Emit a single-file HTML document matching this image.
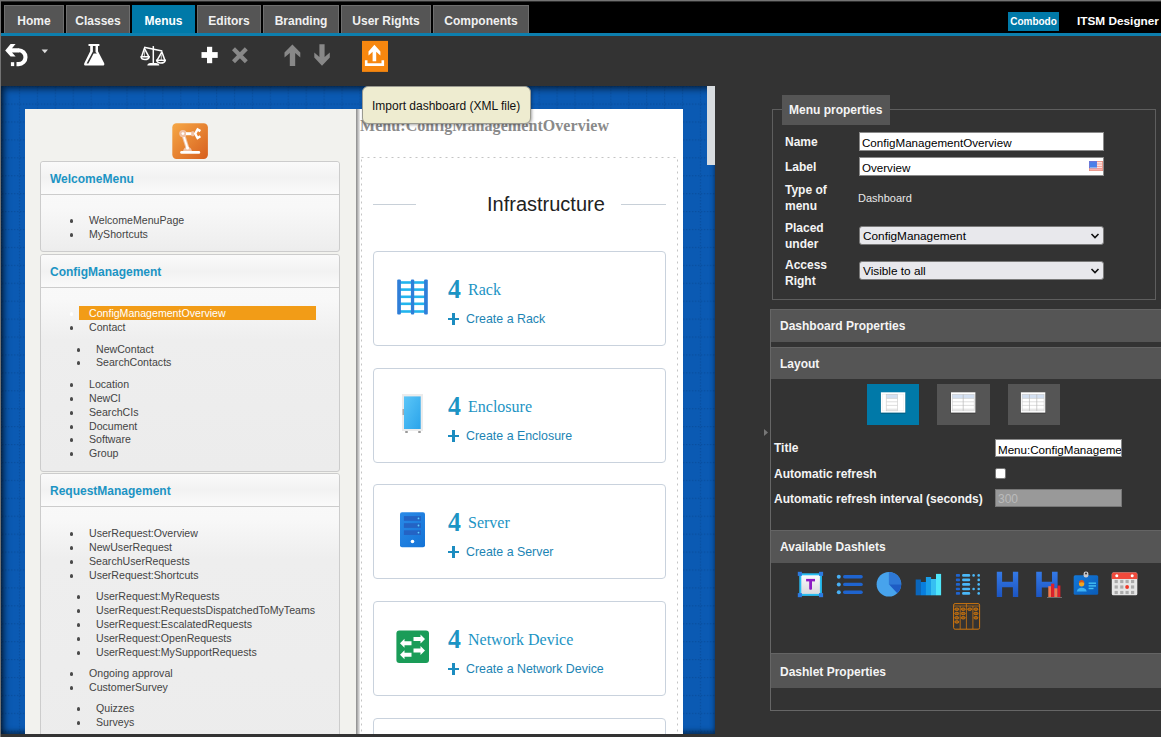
<!DOCTYPE html>
<html><head><meta charset="utf-8">
<style>
*{box-sizing:border-box;margin:0;padding:0}
html,body{width:1161px;height:737px;overflow:hidden;background:#333;font-family:"Liberation Sans",sans-serif}
.a{position:absolute}
#frame{position:absolute;left:0;top:0;width:1161px;height:737px;border-left:1px solid #737373;border-top:1px solid #737373;pointer-events:none;z-index:50}
#tabbar{position:absolute;left:1px;top:1px;width:1160px;height:32px;background:#000;border-top:1px solid #2e2e2e}
.tab{position:absolute;top:3px;height:28px;background:#555;border:1px solid #6e6e6e;border-bottom:none;color:#f0f0f0;font-weight:bold;font-size:12px;text-align:center;line-height:31px}
.tab.active{background:#0079a8;border-color:#0079a8;color:#fff}
#blueline{position:absolute;left:1px;top:33px;width:1160px;height:3px;background:#0d7fae}
#toolbar{position:absolute;left:1px;top:36px;width:1160px;height:50px;background:#333}
#canvas{position:absolute;left:1px;top:86px;width:714px;height:648px;background-color:#0b5ab3;overflow:hidden}
#grid{position:absolute;left:0;top:0;width:714px;height:648px}
#shade{position:absolute;left:0;top:0;width:714px;height:648px;box-shadow:inset 3px 3px 7px rgba(0,0,0,.6),inset 0 -3px 5px rgba(0,0,0,.4)}
#leftpanel{position:absolute;left:24px;top:23px;width:332px;height:630px;background:#f2f2ee}
#lpshadow{position:absolute;left:355px;top:23px;width:5px;height:630px;background:linear-gradient(90deg,#8a8a8a,#a8a8a8 25%,#dcdcdc 65%,#fafafa)}
#dash{position:absolute;left:359px;top:23px;width:323px;height:630px;background:#fff}
#scrollbar{position:absolute;left:706px;top:0;width:8px;height:79px;background:#d8dce0}
.mbox{position:absolute;left:15px;width:300px;border:1px solid #ccc;border-radius:3px;background:linear-gradient(#fafafa 0,#f8f8f8 45px,#eeeeee 85px,#ececec)}
.mhead{height:33px;border-bottom:1px solid #ccc;background:linear-gradient(#fafafa,#f2f2f2 50%,#fafafa);color:#1c94c4;font-weight:bold;font-size:12px;padding-left:9px;line-height:35px;border-radius:3px 3px 0 0}
.mi{position:absolute;font-size:10.6px;color:#444;white-space:nowrap;margin-top:1px}
.mi:before{content:"";position:absolute;left:-19.5px;top:5px;width:3.6px;height:3.6px;border-radius:50%;background:#4a4a4a}
.mi2:before{left:-19.5px}
.mw:before{background:#fff}
#tooltip{position:absolute;left:362px;top:86px;width:169px;height:38px;background:#eeecd0;border:1px solid #9a9a90;border-radius:6px;box-shadow:1px 1px 3px rgba(0,0,0,.35);font-size:12px;color:#111;padding-left:9px;line-height:38px;z-index:20}
.card{position:absolute;left:13px;width:293px;height:95px;border:1px solid #c9d2dd;border-radius:4px;background:#fff}
.cnum{position:absolute;left:74px;top:22.7px;font-family:"Liberation Serif",serif;font-weight:bold;font-size:28px;color:#1c94c4;line-height:28px;transform:scaleX(.92);transform-origin:0 0}
.cname{position:absolute;left:94px;top:28.5px;font-family:"Liberation Serif",serif;font-size:16px;color:#1c94c4;line-height:18px;white-space:nowrap}
.ccreate{position:absolute;left:92px;top:59px;font-size:12.4px;color:#1c84b4;line-height:16px;white-space:nowrap}
.ccreate:before{content:"";position:absolute;left:-18.5px;top:6.5px;width:11.6px;height:2.6px;background:#1c8cc0}.ccreate:after{content:"";position:absolute;left:-13.9px;top:2px;width:2.6px;height:11.6px;background:#1c8cc0}
.lbl{position:absolute;color:#f4f4f4;font-weight:bold;font-size:12px;line-height:15px;white-space:nowrap;margin-top:1px}
.inp{position:absolute;background:#fff;border:1px solid #8a8a8a;font-size:11.6px;color:#000;padding-left:2px;padding-top:1px;line-height:17px;white-space:nowrap;overflow:hidden}
.sel{position:absolute;background:#e8e8ec;border:1px solid #7a7a7a;border-radius:3px;font-size:11.8px;color:#000;padding-left:3px;padding-top:1px;line-height:17px;white-space:nowrap}
.bar{position:absolute;left:771px;width:390px;background:#555;border-top:1px solid #646464;color:#f4f4f4;font-weight:bold;font-size:12px;padding-left:9px}
.lbtn{position:absolute;top:384px;width:52px;height:41px;background:#555}
</style></head>
<body>
<div id="frame"></div>
<div id="tabbar">
  <div class="tab" style="left:3px;width:60px">Home</div>
  <div class="tab" style="left:65px;width:64px">Classes</div>
  <div class="tab active" style="left:131px;width:63px">Menus</div>
  <div class="tab" style="left:196px;width:64px">Editors</div>
  <div class="tab" style="left:262px;width:76px">Branding</div>
  <div class="tab" style="left:340px;width:90px">User Rights</div>
  <div class="tab" style="left:432px;width:96px">Components</div>
  <div class="a" style="left:1007px;top:10px;width:51px;height:19px;background:#0079a8;color:#fff;font-weight:bold;font-size:10px;line-height:19px;text-align:center">Combodo</div>
  <div class="a" style="left:1076px;top:9px;color:#fff;font-weight:bold;font-size:11.8px;line-height:20px;white-space:nowrap">ITSM Designer</div>
</div>
<div id="blueline"></div>
<div id="toolbar"></div>

<!-- TOOLBAR ICONS -->
<svg class="a" style="left:0;top:0;z-index:5" width="400" height="86" viewBox="0 0 400 86">
  <g fill="#fff">
    <polygon points="5.2,50.4 10.6,44.1 15.6,44.1 12,48.2 19,48.2 19,52.4 12,52.4 15.6,56.6 10.6,56.6"/>
    <rect x="10.9" y="62.2" width="3.3" height="3.9"/>
  </g>
  <path d="M18.6 50.3 A6.9 6.9 0 0 1 18.6 64.1 L16.5 64.1" fill="none" stroke="#fff" stroke-width="4.1"/>
  <polygon points="41.6,49.4 48,49.4 44.8,53.2" fill="#ddd"/>
  <!-- flask -->
  <path d="M88.5 44.1 H99.4 V45.9 H98 V51.2 L104.2 63.2 Q104.9 65.6 102.6 65.6 H85.8 Q83.5 65.6 84.3 63.2 L90.2 51.2 V45.9 H88.5 Z" fill="#fff"/>
  <path d="M92.9 45.9 H95.5 V52 L96.9 53.6 H93.6 L88.4 63.6 H86.6 L92.9 51.5 Z" fill="#333"/>
  <!-- scales -->
  <g fill="none" stroke="#fff" stroke-width="1.5" stroke-linejoin="round">
    <line x1="153.3" y1="46.1" x2="153.3" y2="63.5"/>
    <line x1="144.1" y1="47.3" x2="162.3" y2="51.1"/>
    <path d="M141.6 56.7 L144.4 48.3 L148.8 56.7 M157 60.3 L161.9 52 L164.9 60.3"/>
    <path d="M141 56.7 Q141.4 59.6 145 59.6 Q148.6 59.6 149.3 56.7 Z M156.6 60.2 Q157 63 160.8 63 Q164.6 63 165.3 60.2 Z"/>
  </g>
  <g stroke="#fff" stroke-width="0.7"><line x1="144.4" y1="51" x2="144.4" y2="56.5"/><line x1="161.3" y1="54.5" x2="161.3" y2="60"/></g>
  <path d="M147.3 65.6 H159.3 Q159.2 63.3 156 63 H150.6 Q147.4 63.3 147.3 65.6 Z" fill="#fff"/>
  <!-- plus -->
  <rect x="207" y="46.8" width="5.2" height="16.4" fill="#fff"/>
  <rect x="201.5" y="52.1" width="16.2" height="5.8" fill="#fff"/>
  <!-- x -->
  <path d="M233.5 48.8 L246.3 61.8 M246.3 48.8 L233.5 61.8" stroke="#888" stroke-width="4.2"/>
  <!-- up/down -->
  <polygon points="292.4,44.4 300.3,52.5 300.3,57.6 295.2,53 295.2,65.9 289.8,65.9 289.8,53 284.5,57.6 284.5,52.5" fill="#888"/>
  <polygon points="322,65.7 329.8,57.4 329.8,52.4 324.6,57 324.6,44.2 319.4,44.2 319.4,57 314.3,52.4 314.3,57.4" fill="#888"/>
  <!-- upload -->
  <rect x="362" y="40.9" width="26" height="31" fill="#f7870f"/>
  <polygon points="374.4,44.7 380.4,51.5 380.4,55.6 376.2,51.8 376.2,61.3 372.6,61.3 372.6,51.8 368.5,55.6 368.5,51.5" fill="#fff"/>
  <path d="M366.2 60.2 V64.6 H382.8 V60.2" fill="none" stroke="#fff" stroke-width="2.6"/>
</svg>

<div id="canvas">
  <svg id="grid" width="714" height="648"><defs><pattern id="gp" x="17.9" y="17.5" width="17.92" height="17.92" patternUnits="userSpaceOnUse">
  <g fill="#002050" opacity=".22"><rect x="0" y="1" width="1.2" height="1.4"/><rect x="0" y="4" width="1.2" height="1.4"/><rect x="0" y="7" width="1.2" height="1.4"/><rect x="0" y="10" width="1.2" height="1.4"/><rect x="0" y="13" width="1.2" height="1.4"/><rect x="0" y="16" width="1.2" height="1.4"/>
  <rect y="0" x="1" height="1.2" width="1.4"/><rect y="0" x="4" height="1.2" width="1.4"/><rect y="0" x="7" height="1.2" width="1.4"/><rect y="0" x="10" height="1.2" width="1.4"/><rect y="0" x="13" height="1.2" width="1.4"/><rect y="0" x="16" height="1.2" width="1.4"/></g>
  </pattern></defs><rect width="714" height="648" fill="url(#gp)"/></svg>
  <div id="shade"></div>
  <div id="scrollbar"></div>
  <div id="leftpanel">
    <!-- logo -->
    <svg class="a" style="left:147px;top:14px" width="37" height="37" viewBox="0 0 37 37">
      <defs><linearGradient id="lg" x1="0" y1="0" x2="1" y2="1"><stop offset="0" stop-color="#f6a846"/><stop offset="1" stop-color="#d75f1e"/></linearGradient></defs>
      <rect x="0.3" y="0.2" width="35.6" height="35.7" rx="4.2" fill="url(#lg)"/>
      <path d="M11 28.3 Q11.8 24 15.5 24 Q19.2 24 20 28.3 Z" fill="#f1c2a6"/>
      <line x1="15.5" y1="25" x2="10.9" y2="10.6" stroke="#f1c2a6" stroke-width="3.8"/>
      <line x1="15.5" y1="25" x2="10.9" y2="10.6" stroke="#fff" stroke-width="1.8"/>
      <circle cx="10.9" cy="10.6" r="3.7" fill="#f1c2a6"/>
      <circle cx="10.9" cy="10.6" r="1.4" fill="#fff"/>
      <circle cx="15.5" cy="25" r="1.5" fill="#fff"/>
      <rect x="14" y="9.2" width="6" height="3" fill="#fff"/>
      <rect x="19.2" y="8.2" width="3" height="5" rx="1" fill="#f1c2a6"/>
      <path d="M28.4 8.1 L25.6 6.4 L23.2 10.7 L25.6 15 L28.4 13.3" fill="none" stroke="#fff" stroke-width="2.4"/>
      <rect x="8.2" y="28.1" width="20" height="2.7" rx="1.3" fill="#fff"/>
    </svg>
    <div class="mbox" style="top:52px;height:91px">
      <div class="mhead">WelcomeMenu</div>
    </div>
    <div class="mi" style="left:64px;top:104px">WelcomeMenuPage</div>
    <div class="mi" style="left:64px;top:118px">MyShortcuts</div>

    <div class="mbox" style="top:145px;height:218px">
      <div class="mhead">ConfigManagement</div>
    </div>
    <div class="a" style="left:54px;top:197px;width:237px;height:14px;background:#f29c17"></div>
    <div class="mi mw" style="left:64px;top:197px;color:#fff">ConfigManagementOverview</div>
    <div class="mi" style="left:64px;top:211px">Contact</div>
    <div class="mi mi2" style="left:71px;top:233px">NewContact</div>
    <div class="mi mi2" style="left:71px;top:246px">SearchContacts</div>
    <div class="mi" style="left:64px;top:268px">Location</div>
    <div class="mi" style="left:64px;top:282px">NewCI</div>
    <div class="mi" style="left:64px;top:296px">SearchCIs</div>
    <div class="mi" style="left:64px;top:310px">Document</div>
    <div class="mi" style="left:64px;top:323px">Software</div>
    <div class="mi" style="left:64px;top:337px">Group</div>

    <div class="mbox" style="top:364px;height:301px">
      <div class="mhead">RequestManagement</div>
    </div>
    <div class="mi" style="left:64px;top:417px">UserRequest:Overview</div>
    <div class="mi" style="left:64px;top:431px">NewUserRequest</div>
    <div class="mi" style="left:64px;top:445px">SearchUserRequests</div>
    <div class="mi" style="left:64px;top:459px">UserRequest:Shortcuts</div>
    <div class="mi mi2" style="left:71px;top:480px">UserRequest:MyRequests</div>
    <div class="mi mi2" style="left:71px;top:494px">UserRequest:RequestsDispatchedToMyTeams</div>
    <div class="mi mi2" style="left:71px;top:508px">UserRequest:EscalatedRequests</div>
    <div class="mi mi2" style="left:71px;top:522px">UserRequest:OpenRequests</div>
    <div class="mi mi2" style="left:71px;top:536px">UserRequest:MySupportRequests</div>
    <div class="mi" style="left:64px;top:557px">Ongoing approval</div>
    <div class="mi" style="left:64px;top:571px">CustomerSurvey</div>
    <div class="mi mi2" style="left:71px;top:592px">Quizzes</div>
    <div class="mi mi2" style="left:71px;top:606px">Surveys</div>
  </div>
  <div id="lpshadow"></div>
  <div id="dash">
    <div class="a" style="left:0;top:8px;font-family:'Liberation Serif',serif;font-weight:bold;font-size:16px;color:#8a8a8a;white-space:nowrap;line-height:18px;letter-spacing:.07px">Menu:ConfigManagementOverview</div>
    <svg class="a" style="left:1px;top:48px" width="320" height="600"><rect x="0.5" y="0.5" width="316" height="640" fill="none" stroke="#c4c4c4" stroke-width="1" stroke-dasharray="2 4"/></svg>
    <div class="a" style="left:13px;top:95px;width:43px;height:1px;background:#c8d0d8"></div>
    <div class="a" style="left:261px;top:95px;width:45px;height:1px;background:#c8d0d8"></div>
    <div class="a" style="left:127px;top:83px;font-size:20px;color:#222;line-height:24px">Infrastructure</div>

    <div class="card" style="top:142px">
      <svg class="a" style="left:23px;top:27px" width="33" height="37" viewBox="0 0 33 37">
        <g fill="#22b5ee"><rect x="3" y="2.2" width="27" height="2.6"/><rect x="3" y="9.3" width="27" height="2.6"/><rect x="3" y="16.5" width="27" height="2.6"/><rect x="3" y="23.5" width="27" height="2.6"/><rect x="3" y="31.2" width="27" height="2.6"/></g>
        <g fill="#2f7ed8"><rect x="0.2" y="0.6" width="3.7" height="34.8" rx="1"/><rect x="13.9" y="0.6" width="3.3" height="34.8" rx="1"/><rect x="27.1" y="0.6" width="3.7" height="34.8" rx="1"/></g>
      </svg>
      <div class="cnum">4</div><div class="cname">Rack</div>
      <div class="ccreate">Create a Rack</div>
    </div>
    <div class="card" style="top:259px">
      <svg class="a" style="left:27px;top:25px" width="24" height="41" viewBox="0 0 24 41">
        <defs><linearGradient id="eg" x1="0" y1="0" x2="1" y2="1"><stop offset="0" stop-color="#5cc6f8"/><stop offset="1" stop-color="#2aa4ea"/></linearGradient></defs>
        <rect x="1" y="0" width="21" height="37" fill="#ececec"/>
        <rect x="3" y="2.4" width="16.7" height="32.6" fill="url(#eg)"/>
        <rect x="1.5" y="15" width="1.5" height="6" fill="#aaa"/>
        <rect x="4" y="37" width="3" height="2" rx="1" fill="#999"/><rect x="17" y="37" width="3" height="2" rx="1" fill="#999"/>
      </svg>
      <div class="cnum">4</div><div class="cname">Enclosure</div>
      <div class="ccreate">Create a Enclosure</div>
    </div>
    <div class="card" style="top:375px">
      <svg class="a" style="left:26px;top:27px" width="26" height="36" viewBox="0 0 26 36">
        <defs><linearGradient id="sg" x1="0" y1="0" x2="1" y2="1"><stop offset="0" stop-color="#2a8ae8"/><stop offset="1" stop-color="#1473d6"/></linearGradient></defs>
        <rect x="0" y="0.2" width="25" height="35" rx="2" fill="url(#sg)"/>
        <rect x="3.9" y="4.1" width="17.1" height="4.7" fill="#2463c4"/>
        <rect x="3.9" y="11.2" width="17.1" height="4.7" fill="#2463c4"/>
        <rect x="3.9" y="18.3" width="17.1" height="4.7" fill="#2463c4"/>
        <circle cx="18.5" cy="6.4" r="0.9" fill="#5fd0ff"/><circle cx="18.5" cy="13.5" r="0.9" fill="#5fd0ff"/><circle cx="18.5" cy="20.6" r="0.9" fill="#5fd0ff"/>
        <circle cx="12.5" cy="29.5" r="1.8" fill="#fff"/>
      </svg>
      <div class="cnum">4</div><div class="cname">Server</div>
      <div class="ccreate">Create a Server</div>
    </div>
    <div class="card" style="top:492px">
      <svg class="a" style="left:22px;top:28px" width="34" height="34" viewBox="0 0 34 34">
        <rect x="0.4" y="0.5" width="32.6" height="32.6" rx="3" fill="#1a9c58"/>
        <g fill="#fff">
          <path d="M17.5 7 H24.5 V4.5 L29 9 L24.5 13.5 V11 H17.5 Z"/>
          <path d="M17.5 18.5 H24.5 V16 L29 20.5 L24.5 25 V22.5 H17.5 Z"/>
          <path d="M15.5 11.3 H8.5 V8.8 L4 13.3 L8.5 17.8 V15.3 H15.5 Z"/>
          <path d="M15.5 22.8 H8.5 V20.3 L4 24.8 L8.5 29.3 V26.8 H15.5 Z"/>
        </g>
      </svg>
      <div class="cnum">4</div><div class="cname">Network Device</div>
      <div class="ccreate">Create a Network Device</div>
    </div>
    <div class="card" style="top:609px"></div>
  </div>
</div>

<div id="tooltip">Import dashboard (XML file)</div>

<!-- RIGHT PANEL -->
<div class="a" style="left:772px;top:109px;width:384px;height:191px;border:1px solid #5e5e5e"></div>
<div class="a" style="left:782px;top:95px;width:108px;height:30px;background:#555;color:#f4f4f4;font-weight:bold;font-size:12px;line-height:30px;padding-left:7px">Menu properties</div>
<div class="lbl" style="left:785px;top:134px">Name</div>
<div class="inp" style="left:859px;top:132px;width:245px;height:19px">ConfigManagementOverview</div>
<div class="lbl" style="left:785px;top:159px">Label</div>
<div class="inp" style="left:859px;top:157px;width:245px;height:19px">Overview</div>
<svg class="a" style="left:1089px;top:161px" width="14" height="10" viewBox="0 0 14 10"><rect width="14" height="10" fill="#e88a7c"/><rect x=".8" y=".8" width="12.4" height="8.4" fill="#fbe0dc"/><rect x="1" y="7.4" width="12" height="1" fill="#f06a60"/><rect x="8" y="2.5" width="5" height="1" fill="#f8a8a0"/><rect x="8" y="5" width="5" height="1" fill="#f8a8a0"/><rect x="0" y="0" width="8" height="7.2" fill="#6a78d8"/><rect x="1" y="1.2" width="6.5" height="5.5" fill="#4a80e8"/><rect x="1" y="6.4" width="7" height=".8" fill="#aad8f8"/></svg>
<div class="lbl" style="left:785px;top:181px;line-height:16px">Type of<br>menu</div>
<div class="a" style="left:858px;top:190px;color:#e8e8e8;font-size:11px;line-height:16px">Dashboard</div>
<div class="lbl" style="left:785px;top:219px;line-height:16px">Placed<br>under</div>
<div class="sel" style="left:859px;top:226px;width:245px;height:19px">ConfigManagement</div>
<div class="lbl" style="left:785px;top:256px;line-height:16px">Access<br>Right</div>
<div class="sel" style="left:859px;top:261px;width:245px;height:19px">Visible to all</div>
<svg class="a" style="left:1090px;top:232px" width="10" height="42" viewBox="0 0 10 42"><path d="M1.5 2 L5 5.5 L8.5 2 M1.5 37 L5 40.5 L8.5 37" fill="none" stroke="#111" stroke-width="1.6"/></svg>

<div class="a" style="left:770px;top:309px;width:1px;height:402px;background:#666"></div>
<div class="a" style="left:770px;top:710px;width:391px;height:1px;background:#666"></div>
<div class="bar" style="top:309px;height:33px;line-height:33px">Dashboard Properties</div>
<div class="bar" style="top:347px;height:32px;line-height:32px">Layout</div>
<div class="lbtn" style="left:867px;background:#0079a8"></div>
<div class="lbtn" style="left:937px;width:53px"></div>
<div class="lbtn" style="left:1008px"></div>
<svg class="a" style="left:0;top:0" width="1161" height="440" viewBox="0 0 1161 440"><g transform="translate(880.9,392.3)"><rect x="-0.5" y="1" width="25.4" height="20.8" fill="#000" opacity=".18" rx="1"/><rect x="0" y="0" width="24.4" height="20.3" fill="#fff"/><rect x="1.6" y="2" width="21.2" height="16.5" fill="none" stroke="#eee" stroke-width=".6"/><rect x="5.3" y="2" width="11.399999999999999" height="4.1" fill="#d3e0f2"/><rect x="5.3" y="2" width="11.399999999999999" height="16.5" fill="none" stroke="#c8c8c8" stroke-width=".6"/><line x1="5.3" y1="6.1" x2="16.7" y2="6.1" stroke="#d0d0d0" stroke-width=".7"/><line x1="5.3" y1="9.5" x2="16.7" y2="9.5" stroke="#d0d0d0" stroke-width=".7"/><line x1="5.3" y1="13.1" x2="16.7" y2="13.1" stroke="#d0d0d0" stroke-width=".7"/><line x1="5.3" y1="16.9" x2="16.7" y2="16.9" stroke="#d0d0d0" stroke-width=".7"/></g><g transform="translate(951,392.3)"><rect x="-0.5" y="1" width="25.4" height="20.8" fill="#000" opacity=".18" rx="1"/><rect x="0" y="0" width="24.4" height="20.3" fill="#fff"/><rect x="1.2" y="2" width="22.0" height="4.1" fill="#d3e0f2"/><rect x="1.2" y="2" width="22.0" height="16.5" fill="none" stroke="#c8c8c8" stroke-width=".6"/><line x1="1.2" y1="6.1" x2="23.2" y2="6.1" stroke="#d0d0d0" stroke-width=".7"/><line x1="1.2" y1="9.5" x2="23.2" y2="9.5" stroke="#d0d0d0" stroke-width=".7"/><line x1="1.2" y1="13.1" x2="23.2" y2="13.1" stroke="#d0d0d0" stroke-width=".7"/><line x1="1.2" y1="16.9" x2="23.2" y2="16.9" stroke="#d0d0d0" stroke-width=".7"/><line x1="12.2" y1="2" x2="12.2" y2="18.5" stroke="#b8b8b8" stroke-width=".7"/></g><g transform="translate(1020.9,392.3)"><rect x="-0.5" y="1" width="25.4" height="20.8" fill="#000" opacity=".18" rx="1"/><rect x="0" y="0" width="24.4" height="20.3" fill="#fff"/><rect x="1.2" y="2" width="22.0" height="4.1" fill="#d3e0f2"/><rect x="1.2" y="2" width="22.0" height="16.5" fill="none" stroke="#c8c8c8" stroke-width=".6"/><line x1="1.2" y1="6.1" x2="23.2" y2="6.1" stroke="#d0d0d0" stroke-width=".7"/><line x1="1.2" y1="9.5" x2="23.2" y2="9.5" stroke="#d0d0d0" stroke-width=".7"/><line x1="1.2" y1="13.1" x2="23.2" y2="13.1" stroke="#d0d0d0" stroke-width=".7"/><line x1="1.2" y1="16.9" x2="23.2" y2="16.9" stroke="#d0d0d0" stroke-width=".7"/><line x1="8.533333333333333" y1="2" x2="8.533333333333333" y2="18.5" stroke="#b8b8b8" stroke-width=".7"/><line x1="15.866666666666665" y1="2" x2="15.866666666666665" y2="18.5" stroke="#b8b8b8" stroke-width=".7"/></g></svg>
<svg class="a" style="left:763px;top:428px" width="6" height="9" viewBox="0 0 6 9"><path d="M1 1 L5 4.5 L1 8 Z" fill="#777"/></svg>
<div class="lbl" style="left:774px;top:440px">Title</div>
<div class="inp" style="left:995px;top:439px;width:127px;height:18px;border-color:#888">Menu:ConfigManagement</div>
<div class="lbl" style="left:774px;top:466px">Automatic refresh</div>
<div class="a" style="left:995px;top:468px;width:11px;height:11px;background:#fff;border:1px solid #777;border-radius:2px"></div>
<div class="lbl" style="left:774px;top:491px">Automatic refresh interval (seconds)</div>
<div class="a" style="left:995px;top:489px;width:127px;height:18px;background:#999;border:1px solid #777;color:#bbb;font-size:12px;line-height:18px;padding-left:2px">300</div>
<div class="bar" style="top:530px;height:33px;line-height:33px">Available Dashlets</div>
<div class="bar" style="top:653px;height:35px;line-height:36px">Dashlet Properties</div>
<svg class="a" style="left:0;top:0" width="1161" height="640" viewBox="0 0 1161 640">
<defs>
 <linearGradient id="tg" x1="0" y1="0" x2="0" y2="1"><stop offset="0" stop-color="#fcfcfc"/><stop offset="1" stop-color="#d8d8dc"/></linearGradient>
 <linearGradient id="hg" x1="0" y1="0" x2="0" y2="1"><stop offset="0" stop-color="#3479e6"/><stop offset="1" stop-color="#1c55c2"/></linearGradient>
 <linearGradient id="bg2" x1="0" y1="0" x2="1" y2="1"><stop offset="0" stop-color="#1378d8"/><stop offset="1" stop-color="#0a5cb8"/></linearGradient>
</defs>
<!-- T -->
<rect x="800.3" y="574.3" width="20.6" height="20.6" fill="url(#tg)" stroke="#27bdf2" stroke-width="2"/>
<g fill="#2d7ae0"><rect x="797.8" y="571.8" width="4.1" height="4.1"/><rect x="819" y="571.8" width="4.1" height="4.1"/><rect x="797.8" y="593.1" width="4.1" height="4.1"/><rect x="819" y="593.1" width="4.1" height="4.1"/></g>
<rect x="806.1" y="578.9" width="8.9" height="2.5" fill="#8c1cc4"/>
<rect x="809.2" y="579" width="2.8" height="10.7" rx="1" fill="#8c1cc4"/>
<!-- list -->
<g fill="#48b0f6"><circle cx="838.8" cy="576.7" r="2"/><circle cx="838.8" cy="584.4" r="2"/><circle cx="838.8" cy="592.2" r="2"/></g>
<g fill="#1f64cf"><rect x="843" y="575" width="19.8" height="3.4" rx="1.7"/><rect x="843" y="582.7" width="19.8" height="3.4" rx="1.7"/><rect x="843" y="590.5" width="19.8" height="3.4" rx="1.7"/></g>
<!-- pie -->
<circle cx="888.9" cy="584.2" r="12.3" fill="#47a3ec"/>
<path d="M888.9 584.2 V571.9 A12.3 12.3 0 0 1 901.2 584.2 Z" fill="#2e78d6"/>
<path d="M888.9 584.2 H901.2 A12.3 12.3 0 0 1 897.3 593.2 Z" fill="#1e5cc4"/>
<!-- bars -->
<rect x="915.7" y="579.5" width="5.2" height="15.8" fill="#0a66bc"/>
<rect x="920.8" y="582" width="5.2" height="13.3" fill="#087ede"/>
<rect x="925.9" y="577" width="5.2" height="18.3" fill="#1a9ee8"/>
<rect x="931" y="579" width="5.1" height="16.3" fill="#36bff2"/>
<rect x="936" y="573.9" width="5.1" height="21.4" fill="#4fe6fa"/>
<!-- dotted list -->
<g fill="#1f64cf"><rect x="955.9" y="574.1" width="4.1" height="2.6" rx=".8"/><rect x="955.9" y="578.6" width="4.1" height="2.6" rx=".8"/><rect x="955.9" y="583.1" width="4.1" height="2.6" rx=".8"/><rect x="955.9" y="587.7" width="4.1" height="2.6" rx=".8"/><rect x="955.9" y="592.1" width="4.1" height="2.6" rx=".8"/></g>
<g fill="#4ab8f8"><rect x="962.1" y="574.1" width="8.1" height="2.6" rx="1.2"/><rect x="962.1" y="578.6" width="8.1" height="2.6" rx="1.2"/><rect x="962.1" y="583.1" width="8.1" height="2.6" rx="1.2"/><rect x="962.1" y="587.7" width="8.1" height="2.6" rx="1.2"/><rect x="962.1" y="592.1" width="8.1" height="2.6" rx="1.2"/>
<circle cx="973.6" cy="575.4" r="1.3"/><circle cx="973.6" cy="589" r="1.3"/>
<circle cx="978.7" cy="575.4" r="1.3"/><circle cx="978.7" cy="579.9" r="1.3"/><circle cx="978.7" cy="584.4" r="1.3"/><circle cx="978.7" cy="589" r="1.3"/><circle cx="978.7" cy="593.4" r="1.3"/></g>
<!-- H -->
<path d="M996.8 571.8 H1002.1 V581.8 H1012.9 V571.8 H1018.2 V597.1 H1012.9 V587.2 H1002.1 V597.1 H996.8 Z" fill="url(#hg)"/>
<!-- H bars -->
<path d="M1036.2 571.7 H1041.8 V581.8 H1052 V571.7 H1057.6 V597 H1052 V587.4 H1041.8 V597 H1036.2 Z" fill="url(#hg)"/>
<rect x="1048.3" y="586.2" width="2.9" height="10.8" fill="#f27a4e"/>
<rect x="1051.1" y="583.7" width="3.2" height="13.3" fill="#de1f2a"/>
<rect x="1054.3" y="588.3" width="3.3" height="8.7" fill="#f27a4e"/>
<rect x="1057.6" y="585.5" width="2.8" height="11.5" fill="#de1f2a"/>
<rect x="1047" y="597.1" width="15" height=".9" fill="#777"/>
<!-- badge -->
<rect x="1073.7" y="575.3" width="24.5" height="19.5" rx="1.5" fill="url(#bg2)"/>
<rect x="1083.6" y="571.5" width="4.8" height="6" rx="2.2" fill="#c8c8cc"/>
<circle cx="1086" cy="573.6" r="1" fill="#333"/>
<path d="M1076.8 591.4 Q1077.5 587.8 1081.7 587.8 Q1086 587.8 1086.7 591.4 Z" fill="#3fb2f2"/>
<circle cx="1081.6" cy="583.8" r="2.7" fill="#f3a51e"/>
<path d="M1078.9 583 Q1079 580 1081.6 580 Q1084.3 580 1084.3 583 Q1082 581.5 1078.9 583 Z" fill="#d9541a"/>
<g fill="#42c0f2"><rect x="1088.6" y="582.5" width="7.4" height="1.4"/><rect x="1088.6" y="585.2" width="7.4" height="1.4"/><rect x="1088.6" y="587.8" width="4.9" height="1.4"/></g>
<!-- calendar -->
<rect x="1111.8" y="572.5" width="25.5" height="22.8" rx="1.5" fill="#e6e6e6"/>
<path d="M1111.8 579.1 V574 Q1111.8 572.5 1113.3 572.5 H1135.8 Q1137.3 572.5 1137.3 574 V579.1 Z" fill="#f04a3c"/>
<g fill="#fff"><circle cx="1116.8" cy="575.8" r="1.5"/><circle cx="1132.2" cy="575.8" r="1.5"/></g>
<g fill="#ababab">
<rect x="1114.6" y="579.9" width="3.2" height="3.2"/><rect x="1120.2" y="579.9" width="3.2" height="3.2"/><rect x="1125.5" y="579.9" width="3.2" height="3.2"/><rect x="1131" y="579.9" width="3.2" height="3.2"/>
<rect x="1114.6" y="585.4" width="3.2" height="3.2"/><rect x="1120.2" y="585.4" width="3.2" height="3.2"/><rect x="1131" y="585.4" width="3.2" height="3.2"/>
<rect x="1114.6" y="590.9" width="3.2" height="3.2"/><rect x="1120.2" y="590.9" width="3.2" height="3.2"/><rect x="1125.5" y="590.9" width="3.2" height="3.2"/><rect x="1131" y="590.9" width="3.2" height="3.2"/></g>
<circle cx="1127.1" cy="587" r="1.9" fill="#ee3828"/>
<!-- abacus -->
<g fill="none" stroke="#cf770f" stroke-width="1">
<rect x="953.6" y="603.6" width="26" height="25.6" rx="1.5"/>
<line x1="954" y1="606" x2="979" y2="606" stroke-width=".7"/>
<line x1="960.2" y1="606" x2="960.2" y2="629" stroke-width=".8"/><line x1="966.4" y1="604" x2="966.4" y2="629" stroke-width=".8"/><line x1="972.9" y1="606" x2="972.9" y2="629" stroke-width=".8"/>
<g stroke-width=".9" fill="#8a5518"><ellipse cx="956.8" cy="609.2" rx="2" ry="1.25"/><ellipse cx="956.8" cy="613.5" rx="2" ry="1.25"/><ellipse cx="956.8" cy="617.8" rx="2" ry="1.25"/><ellipse cx="956.8" cy="621.9" rx="2" ry="1.25"/>
<ellipse cx="963.2" cy="609.2" rx="2" ry="1.25"/><ellipse cx="963.2" cy="613.5" rx="2" ry="1.25"/><ellipse cx="963.2" cy="617.8" rx="2" ry="1.25"/>
<ellipse cx="969.7" cy="609.2" rx="2" ry="1.25"/>
<ellipse cx="975.9" cy="609.2" rx="2" ry="1.25"/><ellipse cx="975.9" cy="613.5" rx="2" ry="1.25"/><ellipse cx="975.9" cy="617.8" rx="2" ry="1.25"/></g>
</g>
</svg>

</body></html>
